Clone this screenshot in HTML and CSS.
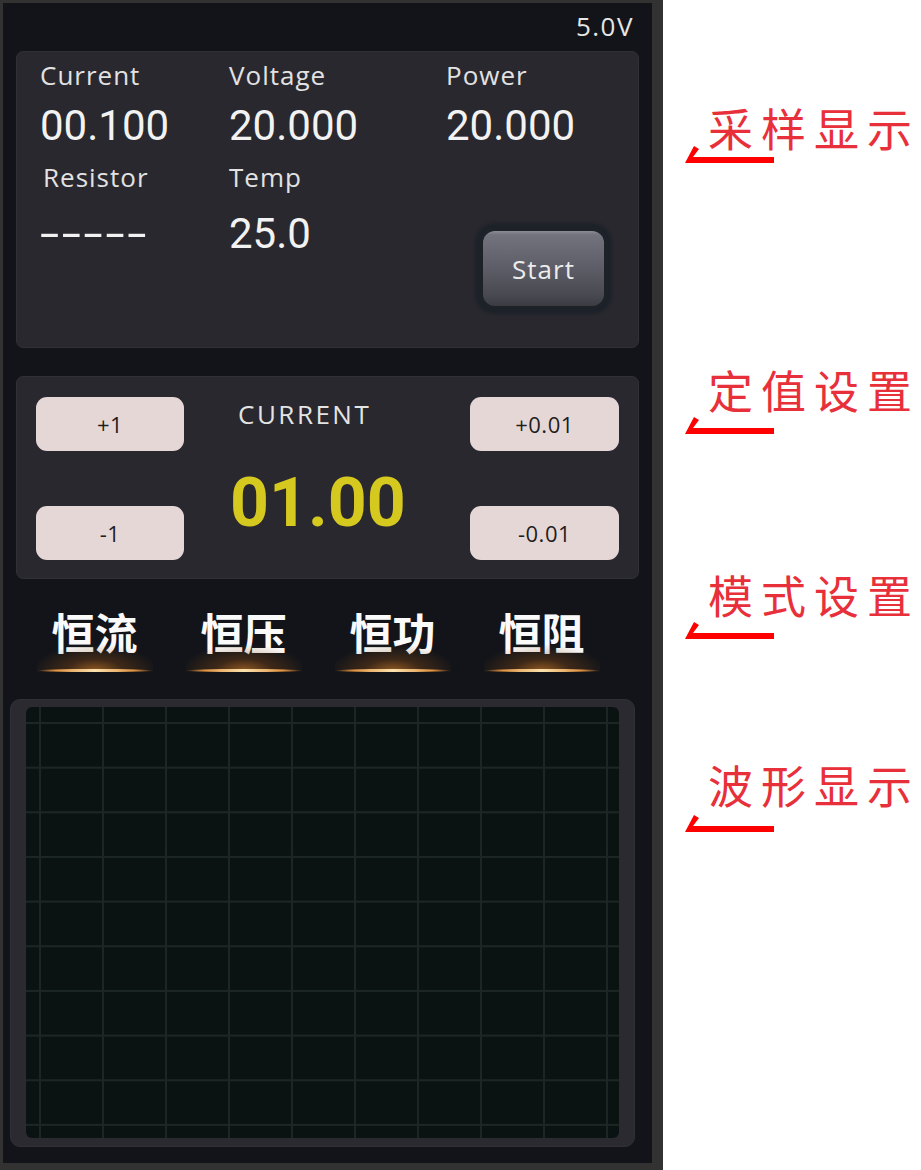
FILE: index.html
```html
<!DOCTYPE html>
<html lang="zh-CN">

<head>
  <meta charset="UTF-8">
  <title>Electronic Load</title>
  <link rel="stylesheet" href="styles.css">
</head>

<body>

  <div class="page">

    <div class="device">
      <div class="status">5.0V</div>

      <!-- live readings -->
      <div class="card sample">
        <div class="cell">
          <div class="label">Current</div>
          <div class="value">00.100</div>
        </div>
        <div class="cell">
          <div class="label">Voltage</div>
          <div class="value">20.000</div>
        </div>
        <div class="cell">
          <div class="label">Power</div>
          <div class="value">20.000</div>
        </div>
        <div class="cell lower">
          <div class="label indent">Resistor</div>
          <div class="value dashes">-----</div>
        </div>
        <div class="cell lower">
          <div class="label">Temp</div>
          <div class="value">25.0</div>
        </div>
        <div class="cell lower">
          <button class="start">Start</button>
        </div>
      </div>

      <!-- set value -->
      <div class="card setpoint">
        <div class="steps">
          <button class="step">+1</button>
          <button class="step">-1</button>
        </div>
        <div class="target">
          <div class="target-name">CURRENT</div>
          <div class="target-value">01.00</div>
        </div>
        <div class="steps">
          <button class="step">+0.01</button>
          <button class="step">-0.01</button>
        </div>
      </div>

      <!-- mode select -->
      <div class="modes">
        <div class="mode"><span>恒流</span><i class="glow"></i></div>
        <div class="mode"><span>恒压</span><i class="glow"></i></div>
        <div class="mode"><span>恒功</span><i class="glow"></i></div>
        <div class="mode"><span>恒阻</span><i class="glow"></i></div>
      </div>

      <!-- waveform -->
      <div class="card scope">
        <div class="scope-grid"></div>
      </div>
    </div>

    <div class="notes">
      <div class="note note-sample">
        <div class="note-text">采样显示</div>
        <svg class="arrow" width="90" height="18" viewBox="0 0 90 18">
          <polygon points="0,18 9,1 14,4 8,12 89,12 89,18" />
        </svg>
      </div>
      <div class="note note-set">
        <div class="note-text">定值设置</div>
        <svg class="arrow" width="90" height="18" viewBox="0 0 90 18">
          <polygon points="0,18 9,1 14,4 8,12 89,12 89,18" />
        </svg>
      </div>
      <div class="note note-mode">
        <div class="note-text">模式设置</div>
        <svg class="arrow" width="90" height="18" viewBox="0 0 90 18">
          <polygon points="0,18 9,1 14,4 8,12 89,12 89,18" />
        </svg>
      </div>
      <div class="note note-wave">
        <div class="note-text">波形显示</div>
        <svg class="arrow" width="90" height="18" viewBox="0 0 90 18">
          <polygon points="0,18 9,1 14,4 8,12 89,12 89,18" />
        </svg>
      </div>
    </div>

  </div>

</body>

</html>
```

FILE: styles.css
```css
* {
  box-sizing: border-box;
}

html,
body {
  margin: 0;
  overflow: hidden;
}

body {
  background: #fff;
  font-family: 'Open Sans', 'Noto Sans', sans-serif;
}

.page {
  display: flex;
  width: 921px;
  height: 1170px;
}

/* screen with its grey bezel */
.device {
  flex: none;
  width: 663px;
  height: 1170px;
  border-style: solid;
  border-color: #323232;
  border-width: 3px 11px 7px 3px;
  background: #121419;
}

.status {
  padding: 8px 18px 0 0;
  text-align: right;
  font-size: 26px;
  line-height: 30px;
  letter-spacing: 1.5px;
  color: #e6e6e6;
}

.card {
  background: #29282f;
  border: 1px solid #2f3136;
  border-radius: 7px;
  margin: 0 13px;
}

/* readings */
.sample {
  height: 297px;
  margin-top: 10px;
  padding: 8px 0 0 23px;
  display: grid;
  grid-template-columns: 189px 217px 1fr;
  align-content: start;
}

.label {
  font-size: 26px;
  line-height: 30px;
  letter-spacing: 1px;
  color: #e2e2e2;
}

.label.indent {
  padding-left: 3px;
}

.value {
  margin-top: 13px;
  font-family: Roboto, sans-serif;
  font-size: 42px;
  line-height: 46px;
  color: #f2f2f2;
}

.lower {
  margin-top: 13px;
}

.lower .value {
  margin-top: 19px;
}

.value.dashes {
  display: inline-block;
  transform: scaleX(1.65);
  transform-origin: left center;
  letter-spacing: 1.6px;
}

.start {
  display: block;
  width: 121px;
  height: 75px;
  margin: 69px 0 0 37px;
  border: none;
  border-radius: 12px;
  background: linear-gradient(#8b8c96 0, #72737d 5%, #5c5d66 50%, #46474f 88%, #3a3c42 100%);
  box-shadow: 0 0 3px 8px rgba(22, 30, 38, 0.6);
  font-family: 'Open Sans', sans-serif;
  font-size: 26px;
  letter-spacing: 1px;
  color: #ececec;
}

/* set value */
.setpoint {
  height: 203px;
  margin-top: 28px;
  padding: 20px 19px 18px 19px;
  display: grid;
  grid-template-columns: 148px 1fr 149px;
}

.steps {
  display: flex;
  flex-direction: column;
  justify-content: space-between;
}

.step {
  height: 54px;
  border: none;
  border-radius: 11px;
  background: #e6d7d7;
  font-family: 'Open Sans', sans-serif;
  font-size: 22px;
  letter-spacing: 0.5px;
  color: #1e1e1e;
}

.target {
  padding-left: 46px;
}

.target-name {
  margin: 2px 0 0 8px;
  font-size: 26px;
  line-height: 30px;
  letter-spacing: 2.5px;
  color: #e4e4e4;
}

.target-value {
  margin-top: 37px;
  font-family: Roboto, sans-serif;
  font-weight: 700;
  font-size: 68px;
  line-height: 74px;
  color: #d5c81f;
}

/* mode tabs */
.modes {
  display: grid;
  grid-template-columns: repeat(4, 149px);
  margin: 30px 0 0 17px;
}

.mode {
  display: flex;
  flex-direction: column;
  align-items: center;
}

.mode span {
  font-family: 'Noto Sans CJK SC', sans-serif;
  font-weight: 700;
  font-size: 43px;
  line-height: 44px;
  color: #fafafa;
}

.glow {
  position: relative;
  display: block;
  width: 116px;
  height: 28px;
  margin-top: -9px;
  background: radial-gradient(ellipse 55% 100% at 50% 100%, rgba(210, 125, 40, 0.7) 0%, rgba(130, 72, 22, 0.4) 45%, rgba(60, 35, 12, 0) 100%);
}

.glow::after {
  content: '';
  position: absolute;
  left: 0;
  right: 0;
  bottom: 0;
  height: 3px;
  border-radius: 50%;
  background: linear-gradient(90deg, rgba(230, 150, 60, 0) 0, #de9140 16%, #fbe2ad 50%, #de9140 84%, rgba(230, 150, 60, 0) 100%);
}

/* waveform */
.scope {
  width: 625px;
  height: 448px;
  margin: 27px 0 0 7px;
  padding: 7px 15px 8px 15px;
  border-radius: 10px;
  background: #2b2a31;
}

.scope-grid {
  height: 100%;
  border-radius: 6px;
  background-color: #0b1312;
  background-image:
    linear-gradient(90deg, #1c2725 2px, transparent 2px),
    linear-gradient(#1c2725 2px, transparent 2px);
  background-size: 63px 44.67px;
  background-position: 13px 15px;
}

/* callouts on the right */
.notes {
  flex: 1;
  padding-left: 22px;
}

.note-text {
  padding-left: 23px;
  white-space: nowrap;
  font-family: 'Noto Sans CJK SC', sans-serif;
  font-size: 45px;
  line-height: 46px;
  letter-spacing: 8px;
  color: #e8303a;
}

.arrow {
  display: block;
  margin-top: 3px;
  fill: #ff0000;
}

.note-sample {
  margin-top: 105px;
}

.note-sample .arrow {
  margin-top: -6px;
}

.note-set {
  margin-top: 204px;
}

.note-mode {
  margin-top: 138px;
}

.note-wave {
  margin-top: 123px;
}

.note-wave .arrow {
  margin-top: 6px;
}
```
